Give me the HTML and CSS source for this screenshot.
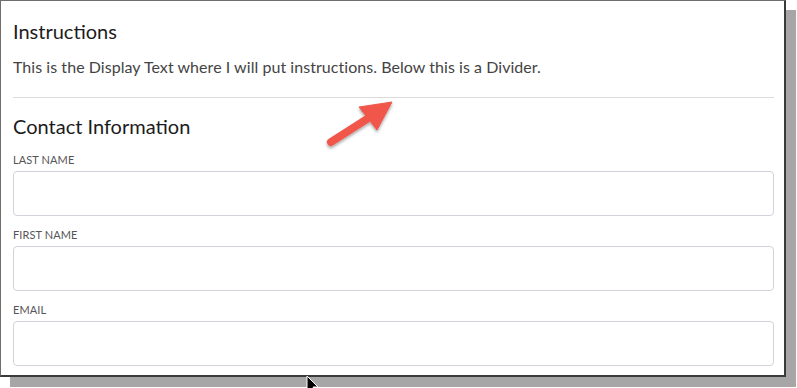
FILE: index.html
```html
<!DOCTYPE html>
<html>
<head>
<meta charset="utf-8">
<link rel="stylesheet" href="styles.css">
</head>
<body>
<div class="window">
  <section class="block">
    <h2 class="heading">Instructions</h2>
    <p class="display-text">This is the Display Text where I will put instructions. Below this is a Divider.</p>
  </section>
  <hr class="divider">
  <section class="block">
    <h2 class="heading heading-contact">Contact Information</h2>
    <div class="field">
      <label class="field-label">LAST NAME</label>
      <div class="field-input"></div>
    </div>
    <div class="field">
      <label class="field-label">FIRST NAME</label>
      <div class="field-input"></div>
    </div>
    <div class="field">
      <label class="field-label">EMAIL</label>
      <div class="field-input"></div>
    </div>
  </section>
</div>
<svg class="annotation-arrow" width="90" height="70" viewBox="320 90 90 70">
  <defs>
    <filter id="sh" x="-30%" y="-30%" width="160%" height="160%">
      <feDropShadow dx="0" dy="2" stdDeviation="1.5" flood-color="#000" flood-opacity="0.35"/>
    </filter>
  </defs>
  <g filter="url(#sh)" fill="#f0574a" stroke="#f0574a">
    <line x1="331" y1="142" x2="367" y2="119" stroke-width="8" stroke-linecap="round"/>
    <polygon points="392,102 359,107 377,130" stroke-width="1" stroke-linejoin="round"/>
  </g>
</svg>
<svg class="cursor" width="16" height="14" viewBox="0 0 16 14">
  <polygon points="1,0 1,16 5,12 8,18 10,17 7,11 12,11" fill="#000" stroke="#fff" stroke-width="1"/>
</svg>
</body>
</html>
```
FILE: styles.css
```css
html, body {
  margin: 0;
  padding: 0;
  background: #ffffff;
}
body {
  width: 797px;
  height: 388px;
  overflow: hidden;
  position: relative;
  font-family: "Lato", "Open Sans", sans-serif;
}
.window {
  box-sizing: border-box;
  width: 786px;
  height: 377px;
  border-left: 1px solid #6e6e6e;
  border-top: 1px solid #6e6e6e;
  border-right: 2px solid #3a3a3a;
  border-bottom: 2px solid #3a3a3a;
  box-shadow: 10px 10px 0 0 #a6a6a6;
  background: #fff;
  padding: 0 10px 0 12px;
  overflow: hidden;
}
.block {
  display: flex;
  flex-direction: column;
}
.heading {
  margin: 17px 0 0 0;
  font-size: 20px;
  line-height: 26px;
  font-weight: 400;
  color: #1c1c1c;
}
.heading-contact {
  margin-top: 15px;
}
.display-text {
  margin: 13px 0 0 0;
  font-size: 16px;
  line-height: 20px;
  color: #444;
  letter-spacing: 0.05px;
}
.divider {
  border: 0;
  border-top: 1px solid #dcdcdc;
  margin: 20px 0 0 0;
  height: 0;
}
.field {
  display: flex;
  flex-direction: column;
}
.field-label {
  margin-top: 12px;
  font-size: 11px;
  line-height: 14px;
  color: #555;
  letter-spacing: 0.1px;
}
.field-input {
  margin-top: 4px;
  height: 43px;
  border: 1px solid #d0d3dc;
  border-radius: 4px;
}
.field:first-of-type .field-label {
  margin-top: 14px;
}
.annotation-arrow {
  position: absolute;
  left: 320px;
  top: 90px;
}
.cursor {
  position: absolute;
  left: 306px;
  top: 376px;
}
```
